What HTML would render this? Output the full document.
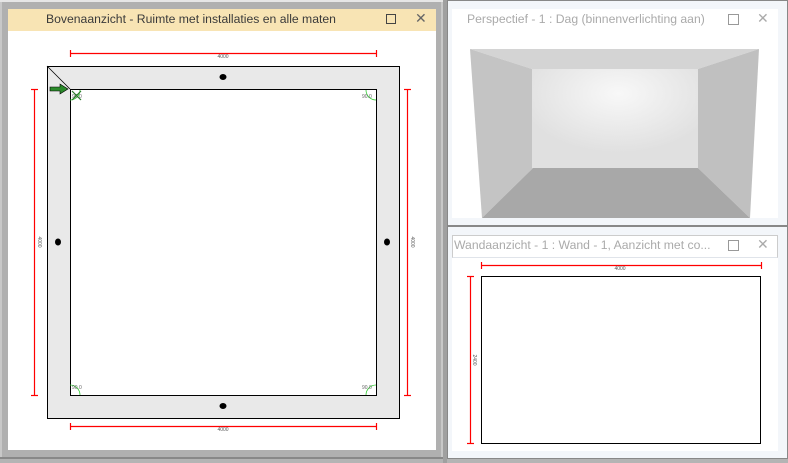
<!DOCTYPE html>
<html><head><style>
body{margin:0;width:788px;height:463px;background:#b4b4b4;position:relative;overflow:hidden;font-family:"Liberation Sans",sans-serif}
.a{position:absolute}
.t{font-size:12.2px;white-space:nowrap}
.ic{position:absolute;width:9px;height:9px;border:1px solid #999}
</style></head><body>
<div class="a" style="left:0;top:0;width:443px;height:458px;background:#c8c8c8;border-top:2px solid #e6e6e6;box-sizing:border-box"></div>
<div class="a" style="left:2px;top:2px;width:439px;height:455px;background:#b0b0b0"></div>
<div class="a" style="left:8px;top:9px;width:428px;height:22px;background:#f8e4b4"></div>
<div class="a t" style="left:46px;top:12px;color:#3a3a3a">Bovenaanzicht - Ruimte met installaties en alle maten</div>
<div class="a" style="left:386px;top:14px;width:10px;height:10px;border:1px solid #444;box-sizing:border-box"></div>
<div class="a" style="left:415px;top:10px;font-size:14px;color:#666">✕</div>
<div class="a" style="left:8px;top:31px;width:428px;height:419px;background:#fff"></div>
<div class="a" style="left:0;top:457px;width:443px;height:2px;background:#888"></div>
<svg class="a" style="left:0;top:0" width="443" height="463">
<rect x="47.5" y="66.5" width="352" height="352" fill="#e9e9e9" stroke="#000"/>
<rect x="70.5" y="89.5" width="306" height="306" fill="#fff" stroke="#000"/>
<line x1="47" y1="66" x2="70" y2="89" stroke="#000" stroke-width=".8"/>
<g stroke="#f00" stroke-width="1.2">
<line x1="70" y1="53.5" x2="377" y2="53.5"/><line x1="70.5" y1="50" x2="70.5" y2="57"/><line x1="376.5" y1="50" x2="376.5" y2="57"/>
<line x1="70" y1="426.5" x2="377" y2="426.5"/><line x1="70.5" y1="423" x2="70.5" y2="430"/><line x1="376.5" y1="423" x2="376.5" y2="430"/>
<line x1="34.5" y1="89" x2="34.5" y2="396"/><line x1="31" y1="89.5" x2="38" y2="89.5"/><line x1="31" y1="395.5" x2="38" y2="395.5"/>
<line x1="407.5" y1="89" x2="407.5" y2="396"/><line x1="404" y1="89.5" x2="411" y2="89.5"/><line x1="404" y1="395.5" x2="411" y2="395.5"/>
</g>
<g font-size="5" fill="#555" text-anchor="middle"><text x="223" y="58">4000</text><text x="223" y="431">4000</text>
<text transform="translate(38,242) rotate(90)">4000</text><text transform="translate(411,242) rotate(90)">4000</text></g>
<g fill="#000"><ellipse cx="223" cy="77" rx="3.5" ry="3"/><ellipse cx="223" cy="406" rx="3.5" ry="3"/><ellipse cx="58" cy="242" rx="3" ry="3.5"/><ellipse cx="387" cy="242" rx="3" ry="3.5"/></g>
<g stroke="#3c3" fill="none" stroke-width=".8"><path d="M70 100 A10 10 0 0 0 80 90"/><path d="M366 90 A10 10 0 0 0 376 100"/><path d="M70 385 A10 10 0 0 1 80 395"/><path d="M366 395 A10 10 0 0 1 376 385"/></g>
<g font-size="5" fill="#666"><text x="72" y="98">90.0</text><text x="362" y="98">90.0</text><text x="72" y="389">90.0</text><text x="362" y="389">90.0</text></g>
<path d="M50 87h10v-3l8 5-8 5v-3h-10z" fill="#2a8a2a" stroke="#000" stroke-width=".6"/>
<path d="M72 91l9 9M81 91l-9 9" stroke="#2a7a2a" stroke-width="1.2"/>
</svg>
<div class="a" style="left:443px;top:0;width:4px;height:463px;background:#a0a0a0"></div>
<div class="a" style="left:447px;top:0;width:341px;height:226px;background:#f3f6fa;border:1px solid #888;box-sizing:border-box"></div>
<div class="a" style="left:447px;top:226px;width:341px;height:233px;background:#f3f6fa;border:1px solid #888;box-sizing:border-box"></div>
<div class="a" style="left:452px;top:9px;width:326px;height:22px;border-bottom:1px solid #e0e4ea;background:#fff"></div>
<div class="a t" style="left:467px;top:12px;color:#aaa">Perspectief - 1 : Dag (binnenverlichting aan)</div>
<div class="ic" style="left:728px;top:14px"></div><div class="a" style="left:757px;top:10px;font-size:14px;color:#aaa">✕</div>
<div class="a" style="left:452px;top:31px;width:326px;height:187px;background:#fff"></div>
<svg class="a" style="left:470px;top:49px" width="290" height="170">
<defs><radialGradient id="g" cx="0.52" cy="0.25" r="0.6"><stop offset="0" stop-color="#f8f8f8"/><stop offset="1" stop-color="#e0e0e0"/></radialGradient></defs>
<polygon points="0,0 289,0 228,20 62,20" fill="#d4d4d4"/>
<polygon points="0,0 62,20 63,119 12,169" fill="#c4c4c4"/>
<polygon points="289,0 228,20 228,119 280,169" fill="#c0c0c0"/>
<polygon points="63,119 228,119 280,169 12,169" fill="#a8a8a8"/>
<rect x="62" y="20" width="166" height="99" fill="url(#g)"/>
</svg>
<div class="a" style="left:452px;top:235px;width:326px;height:23px;border:1px solid #ccc;border-bottom:1px solid #e0e4ea;box-sizing:border-box;background:#fff"></div>
<div class="a t" style="left:454px;top:238px;color:#aaa">Wandaanzicht - 1 : Wand - 1, Aanzicht met co...</div>
<div class="ic" style="left:728px;top:240px"></div><div class="a" style="left:757px;top:236px;font-size:14px;color:#aaa">✕</div>
<div class="a" style="left:452px;top:258px;width:326px;height:193px;background:#fff"></div>
<svg class="a" style="left:452px;top:258px" width="326" height="193">
<g stroke="#f00" stroke-width="1.2"><line x1="29" y1="7.5" x2="310" y2="7.5"/><line x1="29.5" y1="4" x2="29.5" y2="11"/><line x1="309.5" y1="4" x2="309.5" y2="11"/>
<line x1="18.5" y1="18" x2="18.5" y2="186"/><line x1="15" y1="18.5" x2="22" y2="18.5"/><line x1="15" y1="185.5" x2="22" y2="185.5"/></g>
<text x="168" y="12" font-size="5" fill="#555" text-anchor="middle">4000</text>
<text transform="translate(21,102) rotate(90)" font-size="5" fill="#555" text-anchor="middle">2400</text>
<rect x="29.5" y="18.5" width="279" height="167" fill="#fff" stroke="#000"/>
</svg>
</body></html>
